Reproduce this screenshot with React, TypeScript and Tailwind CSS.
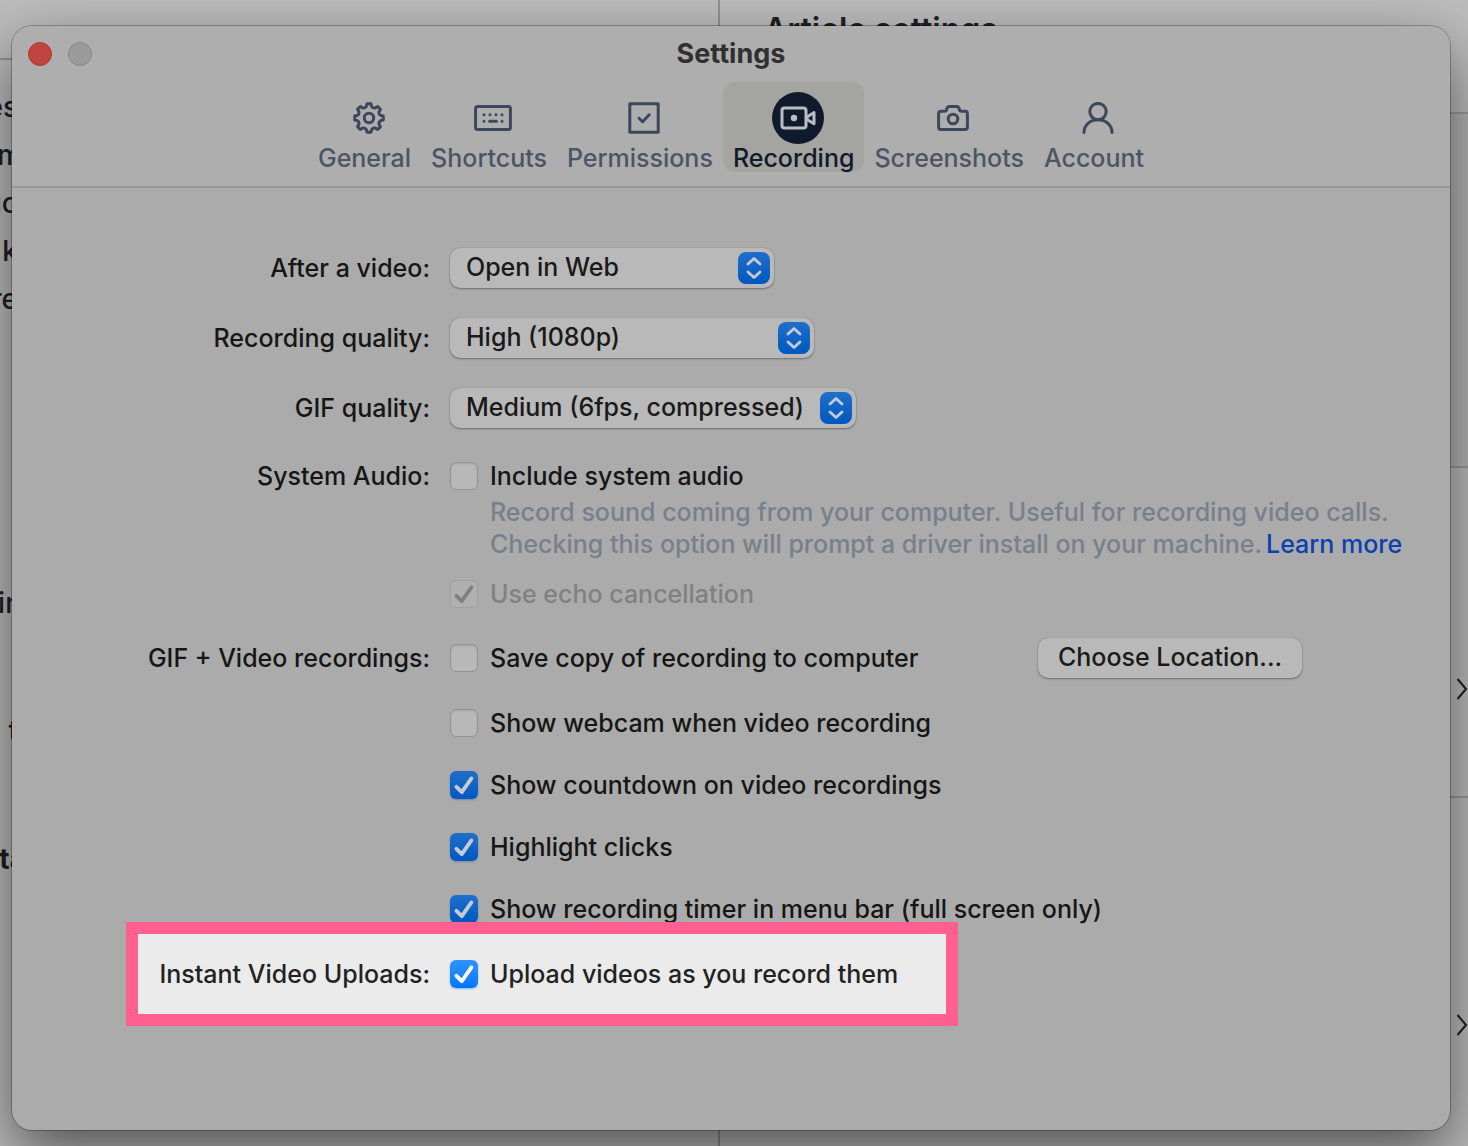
import { useState } from "react";
import type { ReactNode } from "react";
import clsx from "clsx";

// Eight-tooth cog outline on a 32px grid, with the valleys scooped inwards.
function cogPath() {
  const at = (deg: number, r: number) => {
    const a = (deg * Math.PI) / 180;
    return `${(16 + r * Math.sin(a)).toFixed(2)} ${(16 - r * Math.cos(a)).toFixed(2)}`;
  };
  let d = `M${at(-8, 14.4)}`;
  for (let i = 0; i < 8; i++) {
    const c = i * 45;
    d += `L${at(c + 8, 14.4)}L${at(c + 13, 11.8)}Q${at(c + 22.5, 10.4)} ${at(c + 32, 11.8)}L${at(c + 37, 14.4)}`;
  }
  return `${d}Z`;
}

function GeneralIcon() {
  return (
    <svg width="32" height="32" viewBox="0 0 32 32" fill="none" stroke="currentColor" strokeWidth="3" strokeLinejoin="round">
      <path d={cogPath()} />
      <circle cx="16" cy="16" r="4.7" />
    </svg>
  );
}

function ShortcutsIcon() {
  return (
    <svg width="38" height="32" viewBox="0 0 38 32" fill="none" stroke="currentColor" strokeWidth="3" strokeLinecap="round">
      <rect x="1.6" y="4.4" width="34.8" height="23.2" rx="2" />
      <path d="M10 12.8h.01M16 12.8h.01M22 12.8h.01M28 12.8h.01M10 19.2h.01M15.6 19.2h6.8M28 19.2h.01" />
    </svg>
  );
}

function PermissionsIcon() {
  return (
    <svg width="32" height="32" viewBox="0 0 32 32" fill="none" stroke="currentColor" strokeWidth="3" strokeLinejoin="round">
      <rect x="1.8" y="1.8" width="28.4" height="28.4" />
      <path d="M11 16.2l3.6 3.6 6.6-7" strokeLinecap="round" />
    </svg>
  );
}

function RecordingIcon() {
  return (
    <span className="flex size-[52px] items-center justify-center rounded-full bg-[#111a2c] text-[#b9bdc4]">
      <svg width="36" height="24" viewBox="0 0 36 24" fill="none" stroke="currentColor" strokeWidth="3" strokeLinejoin="round">
        <rect x="2" y="2" width="24" height="20" rx="2.5" />
        <circle cx="14" cy="12" r="3.2" fill="currentColor" stroke="none" />
        <path d="M27 11L34 6.6v11.2L27 13.4z" />
      </svg>
    </span>
  );
}

function ScreenshotsIcon() {
  return (
    <svg width="32" height="32" viewBox="0 0 32 32" fill="none" stroke="currentColor" strokeWidth="3" strokeLinejoin="round">
      <path d="M3.8 9.2h4c1.4 0 1.6-.7 2-2.2.4-1.8.8-2.6 2.4-2.6h7.6c1.6 0 2 .8 2.4 2.6.4 1.5.6 2.2 2 2.2h4c1.4 0 2.2.8 2.2 2.2v13.8c0 1.4-.8 2.2-2.2 2.2H3.8c-1.4 0-2.2-.8-2.2-2.2V11.4c0-1.4.8-2.2 2.2-2.2z" />
      <circle cx="16" cy="17" r="4.8" />
    </svg>
  );
}

function AccountIcon() {
  return (
    <svg width="32" height="32" viewBox="0 0 32 32" fill="none" stroke="currentColor" strokeWidth="3" strokeLinecap="round">
      <circle cx="16" cy="9.6" r="8.2" />
      <path d="M2 30.4C2 23 8.2 17.8 16 17.8S30 23 30 30.4" />
    </svg>
  );
}

const tabs = [
  { name: "General", icon: <GeneralIcon /> },
  { name: "Shortcuts", icon: <ShortcutsIcon /> },
  { name: "Permissions", icon: <PermissionsIcon /> },
  { name: "Recording", icon: <RecordingIcon /> },
  { name: "Screenshots", icon: <ScreenshotsIcon /> },
  { name: "Account", icon: <AccountIcon /> },
];

interface PopUpProps {
  id: string;
  options: string[];
  className: string;
}

function PopUp({ id, options, className }: PopUpProps) {
  return (
    <div className={clsx("relative h-10", className)}>
      <select
        id={id}
        className="h-10 w-full appearance-none rounded-[10px] bg-[#b9b9b9] pb-0.5 pl-4 text-[#1a1a1a] shadow-[0_1px_2px_rgba(0,0,0,0.35),0_0_1px_rgba(0,0,0,0.3)]"
      >
        {options.map((o) => (
          <option key={o}>{o}</option>
        ))}
      </select>
      <span className="pointer-events-none absolute top-1 right-1 flex size-8 items-center justify-center rounded-lg bg-linear-to-b from-[#1f70cb] to-[#0057be]">
        <svg width="16" height="24" viewBox="0 0 16 24" fill="none" stroke="#c4cbd6" strokeWidth="2.8" strokeLinecap="round" strokeLinejoin="round">
          <path d="M2 8l6-5.6L14 8M2 16l6 5.6 6-5.6" />
        </svg>
      </span>
    </div>
  );
}

interface CheckProps {
  label: string;
  checked?: boolean;
  disabled?: boolean;
  bright?: boolean;
}

function Check({ label, checked = false, disabled = false, bright = false }: CheckProps) {
  const [on, setOn] = useState(checked);

  return (
    <label className={clsx("flex h-10 items-center gap-3 whitespace-nowrap", disabled && "text-[#818181]")}>
      <span className="relative flex size-7">
        <input
          type="checkbox"
          checked={on}
          disabled={disabled}
          onChange={(e) => setOn(e.target.checked)}
          className={clsx(
            "size-7 appearance-none rounded-md",
            disabled && "border border-[#9f9f9f] bg-[#b0b0b0]",
            !disabled && !on && "border border-[#949494] bg-[#b8b8b8] shadow-[inset_0_1px_2px_rgba(0,0,0,0.12)]",
            !disabled && on && !bright && "bg-linear-to-b from-[#1f70cb] to-[#0057be] shadow-[0_1px_2px_rgba(0,60,140,0.3)]",
            !disabled && on && bright && "bg-linear-to-b from-[#2f92ff] to-[#0077ff] shadow-[0_1px_2px_rgba(0,100,255,0.4)]",
          )}
        />
        {on && (
          <svg
            className={clsx(
              "pointer-events-none absolute inset-0",
              disabled ? "text-[#808080]" : bright ? "text-white" : "text-[#c4cbd6]",
            )}
            viewBox="0 0 28 28"
            fill="none"
            stroke="currentColor"
            strokeWidth="3.8"
            strokeLinecap="round"
            strokeLinejoin="round"
          >
            <path d="M6.4 15.8l5.4 5.4L21.4 7.4" />
          </svg>
        )}
      </span>
      {label}
    </label>
  );
}

function Row({ label, children }: { label?: ReactNode; children: ReactNode }) {
  return (
    <div className="flex gap-5">
      <div className="flex h-10 w-[418px] shrink-0 items-center justify-end">{label}</div>
      {children}
    </div>
  );
}

function Chevron() {
  return (
    <svg width="12" height="24" viewBox="0 0 12 24" fill="none" stroke="#1d2125" strokeWidth="2">
      <path d="M1.5 2l8.5 10-8.5 10" />
    </svg>
  );
}

// Article editor that shows round the edges of the settings window.
function Backdrop() {
  return (
    <div aria-hidden="true" className="absolute inset-0 flex overflow-hidden bg-[#bcbcbc] text-[#1d2125]">
      <div className="w-1/2 max-w-[720px] shrink-0 border-r-2 border-[#8f9194]">
        <div className="h-[60px] border-b-2 border-[#8f9194]" />
        <div className="flex w-[18px] flex-col items-end pt-[23px] text-[28px] leading-[48px]">
          <span>es</span>
          <span className="-mr-1">m</span>
          <span>uc</span>
          <span>k</span>
          <span>re</span>
          <span className="-mr-1 mt-64">in</span>
          <span className="mt-20">t</span>
          <b className="-mr-2 mt-20">ta</b>
        </div>
      </div>
      <div className="flex flex-1 flex-col">
        <div className="h-[114px] border-b-2 border-[#9a9a9a] pt-3.5 pl-11 text-[32px] font-semibold">Article settings</div>
        <div className="h-[354px] border-b-2 border-[#9a9a9a] bg-[#b4b4b4]" />
        <div className="flex h-[330px] justify-end border-b-2 border-[#9a9a9a] pt-[209px]">
          <Chevron />
        </div>
        <div className="flex flex-1 justify-end pt-[215px]">
          <Chevron />
        </div>
      </div>
    </div>
  );
}

export default function App() {
  const [active, setActive] = useState("Recording");

  return (
    <div className="relative min-h-screen overflow-hidden pt-[26px] pr-[18px] pb-4 pl-3 font-[Inter,sans-serif] text-[25px] leading-8 font-[450] text-[#161616]">
      <Backdrop />

      <main className="relative rounded-[20px] bg-[#ababab] shadow-[0_0_0_1px_rgba(0,0,0,0.25),0_24px_60px_rgba(0,0,0,0.55)]">
        <header className="rounded-t-[20px] border-b-2 border-[#969696] bg-[#aeaeae] pb-3.5">
          <div className="grid h-14 grid-cols-3 items-center px-4">
            <div className="flex gap-4">
              <button type="button" aria-label="Close" className="size-6 rounded-full border border-[#a93a33] bg-[#c0453e]" />
              <button type="button" aria-label="Minimize" className="size-6 rounded-full border border-[#868686] bg-[#9b9b9b]" />
            </div>
            <h1 className="text-center text-[27px] font-bold text-[#303030]">Settings</h1>
          </div>
          <nav className="flex justify-center">
            {tabs.map((tab) => (
              <button
                key={tab.name}
                type="button"
                onClick={() => setActive(tab.name)}
                className={clsx(
                  "flex flex-col items-center rounded-xl px-2.5 pt-2.5",
                  tab.name === active ? "bg-[#a4a4a1] text-[#111a2c]" : "text-[#4b5567]",
                )}
              >
                <span className={clsx("flex h-[52px] items-center pl-2", tab.name !== active && "text-[#3c475b]")}>
                  {tab.icon}
                </span>
                <span className="leading-7">{tab.name}</span>
              </button>
            ))}
          </nav>
        </header>

        <form className="flex flex-col pt-[60px] pb-[104px]">
          <div className="flex flex-col gap-[30px]">
            <Row label={<label htmlFor="after">After a video:</label>}>
              <PopUp id="after" options={["Open in Web"]} className="w-[324px]" />
            </Row>
            <Row label={<label htmlFor="quality">Recording quality:</label>}>
              <PopUp id="quality" options={["High (1080p)"]} className="w-[364px]" />
            </Row>
            <Row label={<label htmlFor="gif">GIF quality:</label>}>
              <PopUp id="gif" options={["Medium (6fps, compressed)"]} className="w-[406px]" />
            </Row>
          </div>

          <div className="mt-7">
            <Row label="System Audio:">
              <div>
                <Check label="Include system audio" />
                <p className="pl-10 whitespace-nowrap text-[#78808c]">
                  Record sound coming from your computer. Useful for recording video calls.
                  <br />
                  Checking this option will prompt a driver install on your machine.
                  <a href="#learn-more" className="ml-1 text-[#0a40b0]">
                    Learn more
                  </a>
                </p>
              </div>
            </Row>
          </div>
          <div className="mt-3.5">
            <Row>
              <Check label="Use echo cancellation" checked disabled />
            </Row>
          </div>

          <div className="mt-6">
            <Row label="GIF + Video recordings:">
              <Check label="Save copy of recording to computer" />
              <button
                type="button"
                className="mr-[148px] ml-auto h-10 w-[264px] rounded-[10px] bg-[#b9b9b9] pb-0.5 text-[#1a1a1a] shadow-[0_1px_2px_rgba(0,0,0,0.35),0_0_1px_rgba(0,0,0,0.3)]"
              >
                Choose Location...
              </button>
            </Row>
          </div>
          <div className="mt-[25px] flex flex-col gap-[22px]">
            <Row>
              <Check label="Show webcam when video recording" />
            </Row>
            <Row>
              <Check label="Show countdown on video recordings" checked />
            </Row>
            <Row>
              <Check label="Highlight clicks" checked />
            </Row>
            <Row>
              <Check label="Show recording timer in menu bar (full screen only)" checked />
            </Row>
          </div>

          {/* The highlight frame overlaps the foot of the row above it. */}
          <div className="relative -mt-[7px] ml-[114px] flex w-[832px] gap-5 border-12 border-[#ff6090] bg-[#ebebeb] py-5 text-[#222]">
            <div className="flex h-10 w-[292px] shrink-0 items-center justify-end">Instant Video Uploads:</div>
            <Check label="Upload videos as you record them" checked bright />
          </div>
        </form>
      </main>
    </div>
  );
}
